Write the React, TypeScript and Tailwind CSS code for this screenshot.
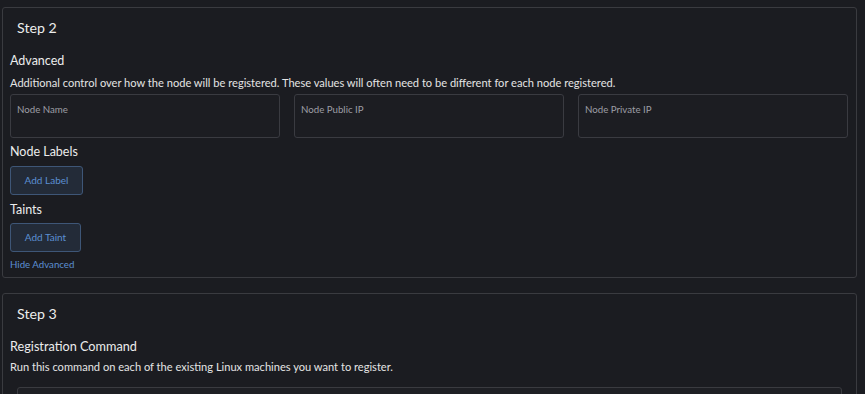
import React from "react";

function Field({ label }: { label: string }) {
  return (
    <div className="h-[44px] w-[270px] rounded-[3px] border border-[#3a3b41] bg-[#1c1d22] px-[6px] pt-[7px] text-[9.7px] leading-[14px] text-[#9c9ea5]">
      {label}
    </div>
  );
}

function Btn({ label, w }: { label: string; w: string }) {
  return (
    <button
      className={`flex h-[29px] ${w} items-center justify-center rounded-[3px] border border-[#3e5677] bg-[#232b38] text-[10px] text-[#5b8fd2]`}
    >
      {label}
    </button>
  );
}

export default function App() {
  return (
    <div
      className="min-h-[394px] w-[865px] bg-[#1b1c21] pt-[7px] text-[#ececec]"
      style={{ fontFamily: "Lato, 'Open Sans', sans-serif" }}
    >
      <div className="ml-[2px] w-[855px] rounded-[3px] border border-[#3a3b40] bg-[#1b1c21] px-[7px] pb-[6px]">
        <div className="pl-[7px] pt-[8px] text-[14.2px] leading-[24px]">Step 2</div>
        <div className="mt-[11px] text-[12.5px] leading-[20px]">Advanced</div>
        <div className="mt-[3px] text-[11.1px] leading-[18px] text-[#e4e4e4]">
          Additional control over how the node will be registered. These values will often need to be different for each node registered.
        </div>
        <div className="mt-[2px] flex gap-[14px]">
          <Field label="Node Name" />
          <Field label="Node Public IP" />
          <Field label="Node Private IP" />
        </div>
        <div className="mt-[4px] text-[12.5px] leading-[20px]">Node Labels</div>
        <div className="mt-[4px]">
          <Btn label="Add Label" w="w-[73px]" />
        </div>
        <div className="mt-[5px] text-[12.5px] leading-[20px]">Taints</div>
        <div className="mt-[3px]">
          <Btn label="Add Taint" w="w-[71px]" />
        </div>
        <div className="mt-[5px] text-[9.7px] leading-[14px] text-[#5b8fd2]">Hide Advanced</div>
      </div>

      <div className="ml-[2px] mt-[15px] h-[120px] w-[855px] rounded-[3px] border border-[#3a3b40] bg-[#1b1c21] px-[7px]">
        <div className="pl-[7px] pt-[8px] text-[14.2px] leading-[24px]">Step 3</div>
        <div className="mt-[10px] text-[12.7px] leading-[20px]">Registration Command</div>
        <div className="mt-[2px] text-[11.1px] leading-[18px] text-[#e4e4e4]">
          Run this command on each of the existing Linux machines you want to register.
        </div>
        <div className="ml-[7px] mt-[11px] h-[40px] w-[825px] rounded-[3px] border border-[#3a3b40] bg-[#1e1f24]" />
      </div>
    </div>
  );
}
